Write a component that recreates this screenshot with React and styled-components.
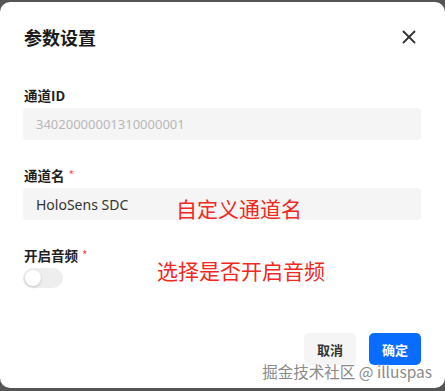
import React, { useState } from 'react'
import styled, { createGlobalStyle } from 'styled-components'
import { X } from 'lucide-react'

const GlobalStyle = createGlobalStyle`
  html, body {
    margin: 0;
    padding: 0;
    background: #555555;
  }
  body {
    font-family: "Noto Sans", "Noto Sans CJK SC", sans-serif;
  }
`;

const Page = styled.div`
  width: 445px;
  height: 391px;
  position: relative;
  padding-top: 2px;
  box-sizing: border-box;
  overflow: hidden;
`;

const Dialog = styled.div`
  width: 445px;
  height: 386px;
  background: #ffffff;
  border-radius: 10px;
  padding: 23px 24px 23px 23px;
  box-sizing: border-box;
  display: flex;
  flex-direction: column;
`;

const Header = styled.div`
  display: flex;
  align-items: center;
  justify-content: space-between;
  height: 24px;
  margin-bottom: 36px;
`;

const Title = styled.h2`
  margin: 0 0 0 1px;
  font-size: 18px;
  line-height: 24px;
  font-weight: 700;
  color: #1a1a1a;
  font-family: "Noto Sans CJK SC", sans-serif;
`;

const CloseButton = styled.button`
  border: none;
  background: none;
  padding: 0;
  margin-right: 1px;
  display: flex;
  color: #333;
  cursor: pointer;
`;

const Field = styled.div`
  position: relative;
  margin-bottom: ${p => p.last ? 0 : 25}px;
`;

const Label = styled.div`
  font-size: 13.5px;
  line-height: 20px;
  font-weight: 700;
  color: #1f1f1f;
  margin: 0 0 3px 1px;
  font-family: "Noto Sans CJK SC", sans-serif;
  display: flex;
  align-items: center;
`;

const Required = styled.span`
  color: #ff4d4f;
  font-size: 12px;
  margin-left: 4px;
  font-weight: 400;
`;

const Input = styled.input`
  width: 100%;
  height: 32px;
  box-sizing: border-box;
  border: none;
  border-radius: 4px;
  background: #f5f5f5;
  padding: 0 13px;
  font-size: ${p => p.disabled ? 13 : 14}px;
  font-family: "Noto Sans", "Noto Sans CJK SC", sans-serif;
  color: ${p => p.disabled ? '#b8b8b8' : '#333'};
  outline: none;
`;

const Note = styled.span`
  position: absolute;
  left: ${p => p.left}px;
  top: ${p => p.top}px;
  font-size: ${p => p.size}px;
  line-height: 1;
  color: #f0281e;
  font-family: "Noto Sans CJK SC", sans-serif;
  pointer-events: none;
`;

const Track = styled.button`
  width: 40px;
  height: 20px;
  margin-top: 2px;
  border: none;
  border-radius: 10px;
  background: ${p => p.on ? '#1677ff' : '#eeeeee'};
  padding: 2px;
  display: flex;
  justify-content: ${p => p.on ? 'flex-end' : 'flex-start'};
  cursor: pointer;
`;

const Knob = styled.span`
  width: 16px;
  height: 16px;
  border-radius: 50%;
  background: #fff;
  box-shadow: 0 1px 3px rgba(0, 0, 0, 0.18);
`;

const Footer = styled.div`
  margin-top: auto;
  display: flex;
  justify-content: flex-end;
  gap: 13px;
`;

const Button = styled.button`
  height: 32px;
  padding: 0 13px;
  border: none;
  border-radius: 5px;
  font-size: 13px;
  font-weight: 700;
  font-family: "Noto Sans CJK SC", sans-serif;
  background: ${p => p.primary ? '#0a6cff' : '#f5f5f5'};
  color: ${p => p.primary ? '#fff' : '#333'};
  cursor: pointer;
`;

const Watermark = styled.div`
  position: absolute;
  right: 13px;
  bottom: 12px;
  font-size: 15.5px;
  line-height: 1;
  color: #8a8a8a;
  font-family: "Noto Sans CJK SC", sans-serif;
  text-shadow: 0 0 2px #fff, 0 0 2px #fff;
  pointer-events: none;
`;

const App = () => {
  const [audio, setAudio] = useState(false);
  const [name, setName] = useState('HoloSens SDC');

  return (
    <Page>
      <GlobalStyle />
      <Dialog>
        <Header>
          <Title>参数设置</Title>
          <CloseButton><X size={22} strokeWidth={2} /></CloseButton>
        </Header>

        <Field>
          <Label>通道ID</Label>
          <Input disabled value="34020000001310000001" readOnly />
        </Field>

        <Field>
          <Label>通道名<Required>*</Required></Label>
          <Input value={name} onChange={e => setName(e.target.value)} />
          <Note left={153} top={33} size={21}>自定义通道名</Note>
        </Field>

        <Field last>
          <Label>开启音频<Required>*</Required></Label>
          <Track on={audio} onClick={() => setAudio(!audio)}>
            <Knob />
          </Track>
          <Note left={134} top={15} size={21}>选择是否开启音频</Note>
        </Field>

        <Footer>
          <Button>取消</Button>
          <Button primary>确定</Button>
        </Footer>
      </Dialog>
      <Watermark>掘金技术社区 @ illuspas</Watermark>
    </Page>
  )
}

export default App
